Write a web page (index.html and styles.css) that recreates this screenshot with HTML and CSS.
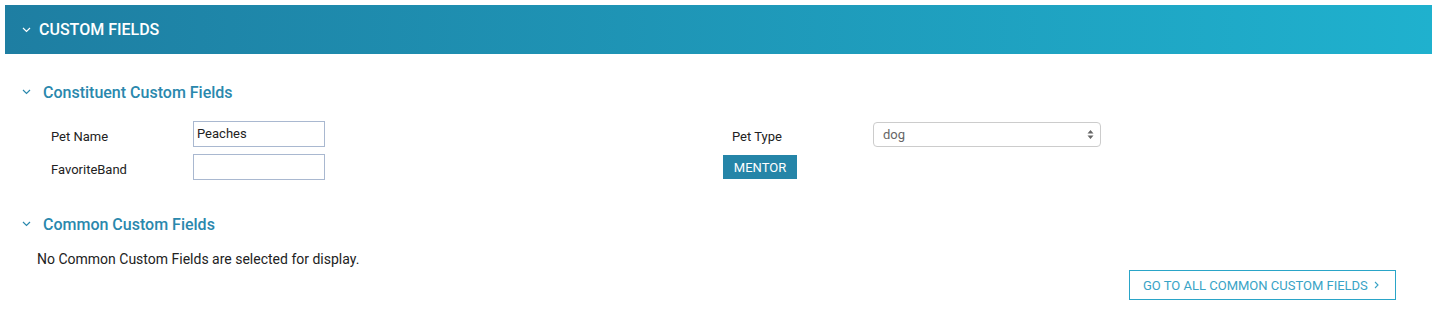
FILE: index.html
```html
<!DOCTYPE html>
<html lang="en">
<head>
    <meta charset="UTF-8">
    <title>Custom Fields</title>
    <link rel="stylesheet" href="styles.css">
</head>
<body>
    <div class="panel">
        <!-- Panel header -->
        <div class="panel-header">
            <svg class="chev" width="9" height="6" viewBox="0 0 9 6"><path d="M1 1l3.5 3.5 3.5-3.5" fill="none" stroke="#fff" stroke-width="1.2"/></svg>
            <span>CUSTOM FIELDS</span>
        </div>

        <!-- Constituent fields -->
        <div class="section">
            <div class="section-title">
                <svg class="chev" width="9" height="6" viewBox="0 0 9 6"><path d="M1 1l3.5 3.5 3.5-3.5" fill="none" stroke="#2a88ad" stroke-width="1.2"/></svg>
                <span>Constituent Custom Fields</span>
            </div>
            <div class="fields">
                <label class="lbl">Pet Name</label>
                <div><input type="text" class="txt" value="Peaches"></div>
                <label class="lbl">Pet Type</label>
                <div class="select">
                    <span>dog</span>
                    <svg width="7" height="11" viewBox="0 0 7 11"><path d="M3.5 1L6.5 4.5H0.5Z M3.5 10L0.5 6.5H6.5Z" fill="#666"/></svg>
                </div>

                <label class="lbl">FavoriteBand</label>
                <div><input type="text" class="txt" value=""></div>
                <div class="mentor-cell"><button class="btn-mentor">MENTOR</button></div>
                <div></div>
            </div>
        </div>

        <!-- Common fields -->
        <div class="section common">
            <div class="section-title">
                <svg class="chev" width="9" height="6" viewBox="0 0 9 6"><path d="M1 1l3.5 3.5 3.5-3.5" fill="none" stroke="#2a88ad" stroke-width="1.2"/></svg>
                <span>Common Custom Fields</span>
            </div>
            <p class="empty">No Common Custom Fields are selected for display.</p>
            <div class="actions">
                <button class="btn-outline">GO TO ALL COMMON CUSTOM FIELDS
                    <svg width="5" height="8" viewBox="0 0 5 8"><path d="M1 1l3 3-3 3" fill="none" stroke="#38a3c6" stroke-width="1.1"/></svg>
                </button>
            </div>
        </div>
    </div>
</body>
</html>
```

FILE: styles.css
```css
body {
    font-family: Roboto, "Liberation Sans", Arial, sans-serif;
    margin: 0;
    padding: 5px 0 0 5px;
    background-color: #fff;
    color: #222;
}
.panel-header {
    height: 49px;
    display: flex;
    align-items: center;
    padding-left: 17px;
    background: linear-gradient(to right, #1e7ea2, #1fb1ce);
    color: #fff;
    font-size: 16px;
    font-weight: 500;
}
.panel-header .chev {
    margin-right: 8px;
}
.section {
    padding-left: 16px;
}
.section-title {
    display: flex;
    align-items: center;
    margin-top: 28px;
    height: 20px;
    color: #2a88ad;
    font-size: 16px;
    font-weight: 500;
}
.section-title .chev {
    margin: 0 12px 0 1px;
}
.fields {
    display: grid;
    grid-template-columns: 142px 539px 141px 228px;
    row-gap: 7px;
    align-items: center;
    margin-top: 19px;
    padding-left: 30px;
}
.lbl {
    font-size: 13px;
    padding-top: 4px;
}
.txt {
    box-sizing: border-box;
    width: 132px;
    height: 26px;
    border: 1px solid #a9b8d0;
    padding: 0 3px 2px;
    font-family: inherit;
    font-size: 13px;
    color: #222;
    outline: none;
}
.select {
    box-sizing: border-box;
    height: 25px;
    display: flex;
    align-items: center;
    justify-content: space-between;
    padding: 0 6px 0 9px;
    border: 1px solid #ccc;
    border-radius: 4px;
    font-size: 13px;
    color: #666;
}
.mentor-cell {
    margin-left: -9px;
}
.btn-mentor {
    height: 24px;
    width: 74px;
    border: none;
    background-color: #2585a8;
    color: #fff;
    font-family: inherit;
    font-size: 13px;
    padding: 0;
}
.common .section-title {
    margin-top: 34px;
}
.empty {
    margin: 16px 0 0 16px;
    font-size: 14px;
    line-height: 18px;
}
.actions {
    display: flex;
    justify-content: flex-end;
    padding-right: 36px;
    margin-top: 2px;
}
.btn-outline {
    box-sizing: border-box;
    height: 30px;
    width: 267px;
    display: flex;
    align-items: center;
    border: 1px solid #2aa5c8;
    background: #fff;
    color: #38a3c6;
    font-family: inherit;
    font-size: 13px;
    padding: 0 0 0 13px;
}
.btn-outline svg {
    margin-left: 6px;
}
```
